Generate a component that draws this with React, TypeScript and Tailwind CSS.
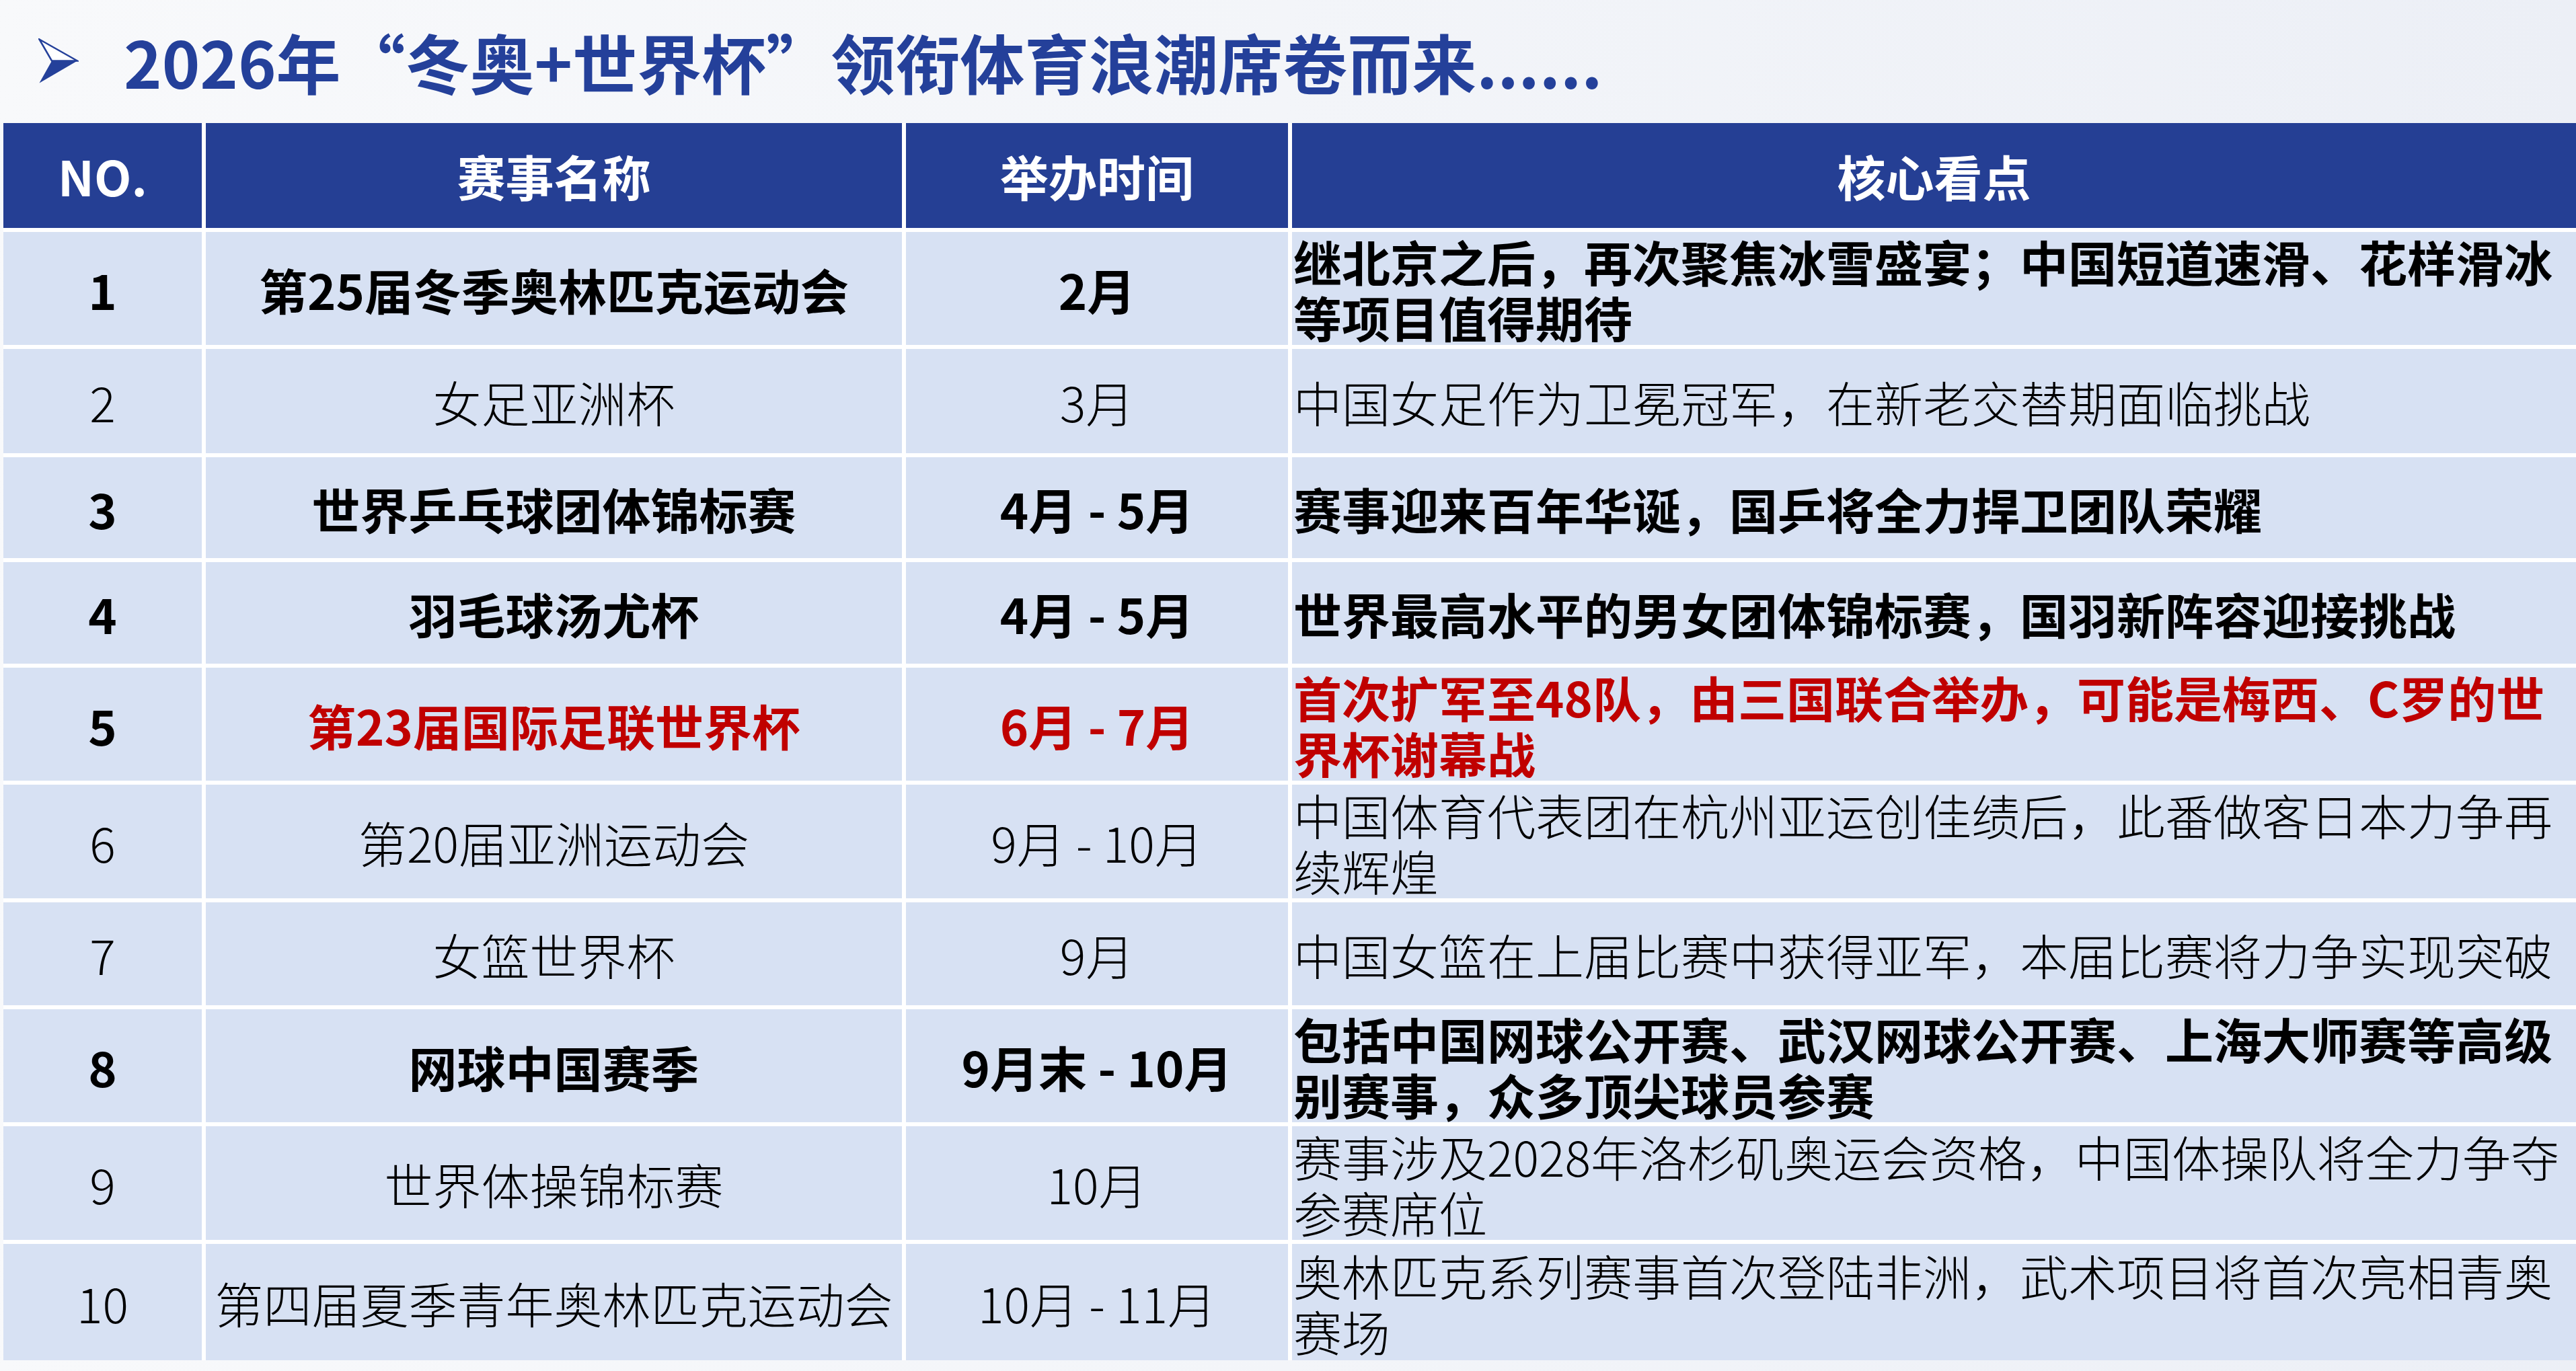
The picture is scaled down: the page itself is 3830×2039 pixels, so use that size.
type Row = {
  no: string;
  name: string;
  time: string;
  lines: string[];
  h: string;
  bold?: boolean;
  red?: boolean;
};

const rows: Row[] = [
  {
    no: "1",
    name: "第25届冬季奥林匹克运动会",
    time: "2月",
    lines: ["继北京之后，再次聚焦冰雪盛宴；中国短道速滑、花样滑冰", "等项目值得期待"],
    h: "h-[168px]",
    bold: true,
  },
  { no: "2", name: "女足亚洲杯", time: "3月", lines: ["中国女足作为卫冕冠军，在新老交替期面临挑战"], h: "h-[155px]" },
  {
    no: "3",
    name: "世界乒乓球团体锦标赛",
    time: "4月 - 5月",
    lines: ["赛事迎来百年华诞，国乒将全力捍卫团队荣耀"],
    h: "h-[150px]",
    bold: true,
  },
  {
    no: "4",
    name: "羽毛球汤尤杯",
    time: "4月 - 5月",
    lines: ["世界最高水平的男女团体锦标赛，国羽新阵容迎接挑战"],
    h: "h-[151px]",
    bold: true,
  },
  {
    no: "5",
    name: "第23届国际足联世界杯",
    time: "6月 - 7月",
    lines: ["首次扩军至48队，由三国联合举办，可能是梅西、C罗的世", "界杯谢幕战"],
    h: "h-[168px]",
    bold: true,
    red: true,
  },
  {
    no: "6",
    name: "第20届亚洲运动会",
    time: "9月 - 10月",
    lines: ["中国体育代表团在杭州亚运创佳绩后，此番做客日本力争再", "续辉煌"],
    h: "h-[169px]",
  },
  { no: "7", name: "女篮世界杯", time: "9月", lines: ["中国女篮在上届比赛中获得亚军，本届比赛将力争实现突破"], h: "h-[153px]" },
  {
    no: "8",
    name: "网球中国赛季",
    time: "9月末 - 10月",
    lines: ["包括中国网球公开赛、武汉网球公开赛、上海大师赛等高级", "别赛事，众多顶尖球员参赛"],
    h: "h-[168px]",
    bold: true,
  },
  {
    no: "9",
    name: "世界体操锦标赛",
    time: "10月",
    lines: ["赛事涉及2028年洛杉矶奥运会资格，中国体操队将全力争夺", "参赛席位"],
    h: "h-[169px]",
  },
  {
    no: "10",
    name: "第四届夏季青年奥林匹克运动会",
    time: "10月 - 11月",
    lines: ["奥林匹克系列赛事首次登陆非洲，武术项目将首次亮相青奥", "赛场"],
    h: "h-[173px]",
  },
];

const cols = "grid grid-cols-[295px_1035px_568px_1909px] gap-[6px]";

export default function App() {
  return (
    <div className="w-[3830px] h-[2039px] overflow-hidden bg-gradient-to-r from-[#f8f9fb] via-[#f3f5f9] to-[#eceff6] font-['Noto_Sans_CJK_SC','Noto_Sans',sans-serif]">
      {/* title */}
      <div className="h-[183px] flex items-center pl-[57px] pb-[2px]">
        <svg width="60" height="68" viewBox="0 0 60 68">
          <polygon points="1.5,1.5 58,33.5 20,33.5" fill="#ffffff" stroke="#24409a" strokeWidth="2.5" strokeLinejoin="miter" />
          <polygon points="20,33.5 58,33.5 1.5,66.5" fill="#24409a" />
        </svg>
        <h1 className="ml-[67px] text-[96px] leading-none font-bold text-[#24409a] whitespace-nowrap">
          2026年“冬奥+世界杯”领衔体育浪潮席卷而来......
        </h1>
      </div>

      {/* table */}
      <div className="ml-[5px] w-[3825px] flex flex-col gap-[6px] bg-white">
        <div className={`${cols} h-[156px] bg-white text-white text-[72px] font-bold`}>
          <div className="bg-[#253f94] flex items-center justify-center">NO.</div>
          <div className="bg-[#253f94] flex items-center justify-center">赛事名称</div>
          <div className="bg-[#253f94] flex items-center justify-center">举办时间</div>
          <div className="bg-[#253f94] flex items-center justify-center">核心看点</div>
        </div>

        {rows.map((r) => {
          const weight = r.bold ? "font-bold" : "font-light";
          const color = r.red ? "text-[#c00000]" : "text-black";
          return (
            <div key={r.no} className={`${cols} ${r.h} text-[72px] leading-[83px]`}>
              <div className={`bg-[#d7e1f3] flex items-center justify-center text-black ${weight}`}>{r.no}</div>
              <div className={`bg-[#d7e1f3] flex items-center justify-center whitespace-nowrap ${weight} ${color}`}>
                {r.name}
              </div>
              <div className={`bg-[#d7e1f3] flex items-center justify-center whitespace-nowrap ${weight} ${color}`}>
                {r.time}
              </div>
              <div className={`bg-[#d7e1f3] flex flex-col justify-center pl-[2px] ${weight} ${color}`}>
                {r.lines.map((l) => (
                  <span key={l} className="whitespace-nowrap">
                    {l}
                  </span>
                ))}
              </div>
            </div>
          );
        })}
      </div>
    </div>
  );
}
